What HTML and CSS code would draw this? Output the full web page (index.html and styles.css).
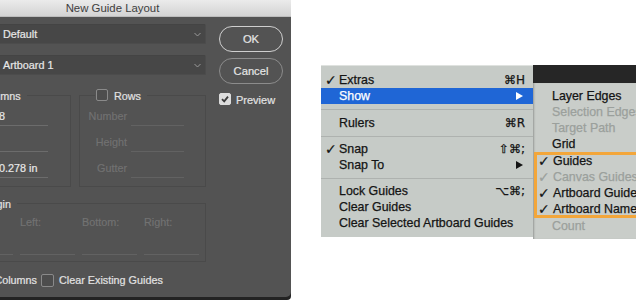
FILE: index.html
```html
<!DOCTYPE html>
<html>
<head>
<meta charset="utf-8">
<title>New Guide Layout</title>
<link rel="stylesheet" href="styles.css">
</head>
<body>
<div class="page">
  <div class="dlg-wrap">
    <div class="dialog">
      <div class="titlebar">New Guide Layout</div>
      <div class="dlg-body">
        <div class="main">
          <div class="sel-row">
            <span class="sel-label">Preset:</span>
            <div class="select"><span>Default</span><svg class="chev" width="7" height="5" viewBox="0 0 7 5"><polyline points="0.5,1 3.5,4 6.5,1" fill="none" stroke="#9a9a9a" stroke-width="1"/></svg></div>
          </div>
          <div class="sel-row second">
            <span class="sel-label">Target:</span>
            <div class="select"><span>Artboard 1</span><svg class="chev" width="7" height="5" viewBox="0 0 7 5"><polyline points="0.5,1 3.5,4 6.5,1" fill="none" stroke="#9a9a9a" stroke-width="1"/></svg></div>
          </div>
          <div class="groups">
            <div class="group">
              <div class="legend"><span class="cb on"><svg width="10" height="10" viewBox="0 0 10 10"><path d="M2 5.2 L4.2 7.4 L8 2.6" fill="none" stroke="#333" stroke-width="1.8"/></svg></span><span class="legend-text">Columns</span></div>
              <div class="field"><span class="flabel">Number</span><span class="fval">8</span></div>
              <div class="field"><span class="flabel">Width</span><span class="fval"></span></div>
              <div class="field"><span class="flabel">Gutter</span><span class="fval">0.278 in</span></div>
            </div>
            <div class="group">
              <div class="legend"><span class="cb"></span><span class="legend-text">Rows</span></div>
              <div class="field off"><span class="flabel">Number</span><span class="fval"></span></div>
              <div class="field off"><span class="flabel">Height</span><span class="fval"></span></div>
              <div class="field off"><span class="flabel">Gutter</span><span class="fval"></span></div>
            </div>
          </div>
          <div class="group margin">
            <div class="legend"><span class="cb"></span><span class="legend-text">Margin</span></div>
            <div class="mfields">
              <div class="mfield"><span class="mlabel">Top:</span><span class="mval"></span></div>
              <div class="mfield"><span class="mlabel">Left:</span><span class="mval"></span></div>
              <div class="mfield"><span class="mlabel">Bottom:</span><span class="mval"></span></div>
              <div class="mfield"><span class="mlabel">Right:</span><span class="mval"></span></div>
            </div>
          </div>
          <div class="bottom-row">
            <span class="cb"></span><span class="btext">Center Columns</span>
            <span class="cb gap"></span><span class="btext">Clear Existing Guides</span>
          </div>
        </div>
        <div class="side">
          <div class="btn default">OK</div>
          <div class="btn">Cancel</div>
          <div class="preview"><span class="cb light"><svg width="10" height="10" viewBox="0 0 10 10"><path d="M2 5.2 L4.2 7.4 L8 2.6" fill="none" stroke="#3a3a3a" stroke-width="1.8"/></svg></span><span>Preview</span></div>
        </div>
      </div>
    </div>
  </div>

  <div class="shot">
    <div class="menu">
      <div class="mi"><span class="ck">✓</span><span>Extras</span><span class="sc">⌘H</span></div>
      <div class="mi sel"><span class="ck"></span><span>Show</span><span class="sc"><i class="tri"></i></span></div>
      <div class="sep first"></div>
      <div class="mi"><span class="ck"></span><span>Rulers</span><span class="sc">⌘R</span></div>
      <div class="sep"></div>
      <div class="mi"><span class="ck">✓</span><span>Snap</span><span class="sc">⇧⌘;</span></div>
      <div class="mi"><span class="ck"></span><span>Snap To</span><span class="sc"><i class="tri"></i></span></div>
      <div class="sep"></div>
      <div class="mi"><span class="ck"></span><span>Lock Guides</span><span class="sc">⌥⌘;</span></div>
      <div class="mi"><span class="ck"></span><span>Clear Guides</span><span class="sc"></span></div>
      <div class="mi"><span class="ck"></span><span>Clear Selected Artboard Guides</span><span class="sc"></span></div>
    </div>
    <div class="subcol">
      <div class="darkbar"></div>
      <div class="submenu">
        <div class="si"><span class="ck"></span><span>Layer Edges</span></div>
        <div class="si dis"><span class="ck"></span><span>Selection Edges</span></div>
        <div class="si dis"><span class="ck"></span><span>Target Path</span></div>
        <div class="si"><span class="ck"></span><span>Grid</span></div>
        <div class="hl">
          <div class="si"><span class="ck">✓</span><span>Guides</span></div>
          <div class="si dis"><span class="ck">✓</span><span>Canvas Guides</span></div>
          <div class="si"><span class="ck">✓</span><span>Artboard Guides</span></div>
          <div class="si"><span class="ck">✓</span><span>Artboard Names</span></div>
        </div>
        <div class="si dis"><span class="ck"></span><span>Count</span></div>
      </div>
    </div>
  </div>
</div>
</body>
</html>
```

FILE: styles.css
```css
* { box-sizing: border-box; }
html, body { margin: 0; padding: 0; background: #ffffff; }
.page {
  width: 636px;
  height: 300px;
  display: flex;
  overflow: hidden;
  font-family: "Liberation Sans", Arial, sans-serif;
}

/* ---------- dialog ---------- */
.dlg-wrap {
  flex: 0 0 291px;
  width: 291px;
  height: 300px;
  background: #232323;
  border-bottom-right-radius: 4px;
  overflow: hidden;
}
.dialog {
  width: 357px;
  height: 297px;
  margin-left: -66px;
  background: #535353;
  border-bottom-right-radius: 5px;
  color: #e2e2e2;
  font-size: 10.8px;
  -webkit-text-stroke: 0.2px currentColor;
}
.titlebar {
  height: 17px;
  line-height: 17px;
  text-align: center;
  font-size: 11.4px;
  color: #3e3e3e;
  background: linear-gradient(#ebebeb, #d3d3d3);
  border-bottom: 1px solid #bdbdbd;
  -webkit-text-stroke: 0;
}
.dlg-body {
  display: flex;
  gap: 13px;
  padding-left: 9px;
}
.main {
  width: 263px;
  padding-top: 7px;
}
.sel-row {
  display: flex;
  align-items: center;
  height: 20px;
}
.sel-row.second { margin-top: 11px; }
.sel-label {
  width: 51px;
  text-align: right;
  padding-right: 6px;
}
.select {
  flex: 1;
  height: 20px;
  display: flex;
  align-items: center;
  justify-content: space-between;
  padding: 0 4px 0 8px;
  background: #474747;
  border: 1px solid #4c4c4c;
  border-top-color: #444;
  border-radius: 2px;
  color: #e8e8e8;
}
.chev { margin-top: 1px; }

.groups {
  display: grid;
  grid-template-columns: 128px 127px;
  gap: 8px;
  margin-top: 20px;
}
.group {
  height: 92px;
  border: 1px solid #4a4a4a;
}
.legend {
  display: flex;
  align-items: center;
  gap: 6px;
  width: fit-content;
  height: 12px;
  margin-top: -7px;
  margin-left: 15px;
  padding: 0 6px 0 1px;
  background: #535353;
}
.legend-text { padding-top: 2px; color: #e2e2e2; }
.cb {
  flex: 0 0 12px;
  width: 12px;
  height: 12px;
  border: 1px solid #8a8a8a;
  border-radius: 2px;
  background: #4d4d4d;
  display: flex;
  align-items: center;
  justify-content: center;
}
.cb.on { background: #d6d6d6; border-color: #d6d6d6; }
.cb.light { background: #dcdcdc; border-color: #dcdcdc; }

.field {
  display: flex;
  align-items: flex-start;
  height: 26px;
}
.legend + .field { margin-top: 4px; }
.flabel {
  width: 47px;
  text-align: right;
  padding: 2px 0 0 0;
  line-height: 19px;
  color: #e2e2e2;
}
.fval {
  width: 53px;
  height: 21px;
  margin-left: 4px;
  padding: 2px 0 0 4px;
  line-height: 19px;
  border-bottom: 1px solid #6c6c6c;
  color: #e8e8e8;
  white-space: nowrap;
}
.field.off .flabel { color: #717171; }
.field.off .fval { border-bottom-color: #626262; }

.group.margin {
  height: 59px;
  margin-top: 16px;
}
.mfields {
  display: flex;
  gap: 7px;
  padding-left: 14px;
  margin-top: 7px;
}
.mfield {
  width: 55px;
  display: flex;
  flex-direction: column;
}
.mlabel {
  line-height: 13px;
  height: 13px;
  color: #727272;
}
.mval {
  height: 26px;
  border-bottom: 1px solid #626262;
}

.bottom-row {
  display: flex;
  align-items: center;
  height: 14px;
  margin-top: 11px;
  margin-left: -2px;
}
.bottom-row .cb { flex-basis: 13px; width: 13px; height: 13px; }
.bottom-row .btext { margin-left: 5px; white-space: nowrap; }
.bottom-row .cb.gap { margin-left: 4px; }

.side {
  width: 64px;
  padding-top: 9px;
}
.btn {
  height: 26px;
  border: 1px solid #8c8c8c;
  border-radius: 13px;
  display: flex;
  align-items: center;
  justify-content: center;
  font-size: 11.2px;
  color: #e6e6e6;
  margin-bottom: 6px;
}
.btn.default { border-color: #cfcfcf; }
.preview {
  display: flex;
  align-items: center;
  gap: 5px;
  margin-top: 9px;
  height: 12px;
}
.preview span:last-child { padding-top: 1px; font-size: 11px; }

/* ---------- menu screenshot ---------- */
.shot {
  flex: 1;
  min-width: 0;
  overflow: hidden;
  display: flex;
  align-items: flex-start;
  padding: 65px 0 0 30px;
  font-size: 12.4px;
  color: #141414;
  -webkit-text-stroke: 0.25px currentColor;
}
.menu {
  flex: 0 0 212px;
  width: 212px;
  background: #c6cbc7;
  border-top: 1px solid #dfe2df;
  padding: 6px 0 6px;
}
.mi {
  display: grid;
  grid-template-columns: 18px 1fr auto;
  height: 16px;
  line-height: 16px;
  padding-right: 8px;
  white-space: nowrap;
}
.ck {
  padding-left: 4px;
  font-size: 14px;
  font-weight: bold;
  font-family: "DejaVu Sans", sans-serif;
  line-height: 16px;
}
.mi.sel { background: #1f66d6; color: #ffffff; }
.sc {
  display: flex;
  align-items: center;
  justify-content: flex-end;
  font-family: "DejaVu Sans", sans-serif;
  font-size: 12px;
}
.tri {
  width: 0;
  height: 0;
  border-left: 7px solid currentColor;
  border-top: 4.5px solid transparent;
  border-bottom: 4.5px solid transparent;
  margin-right: 2px;
}
.sep {
  height: 10px;
  display: flex;
  align-items: center;
}
.sep.first { height: 11px; }
.sep::before {
  content: "";
  flex: 1;
  height: 1px;
  background: #aeb2af;
}

.subcol {
  flex: 0 0 150px;
  width: 150px;
  display: flex;
  flex-direction: column;
}
.darkbar {
  height: 18px;
  background: #262626;
}
.submenu {
  background: #c9cdc9;
  padding: 5px 0;
  box-shadow: inset 2px 0 2px -1px rgba(0,0,0,0.25);
}
.si {
  display: grid;
  grid-template-columns: 19px 1fr;
  height: 16px;
  line-height: 16px;
  white-space: nowrap;
}
.si .ck { padding-left: 4px; }
.si.dis { color: #9ba09c; }
.hl {
  padding: 1px 0;
  margin-left: 1px;
  box-shadow: inset 0 0 0 3px #f3a63a;
}
.hl .si .ck { padding-left: 4px; }
```
